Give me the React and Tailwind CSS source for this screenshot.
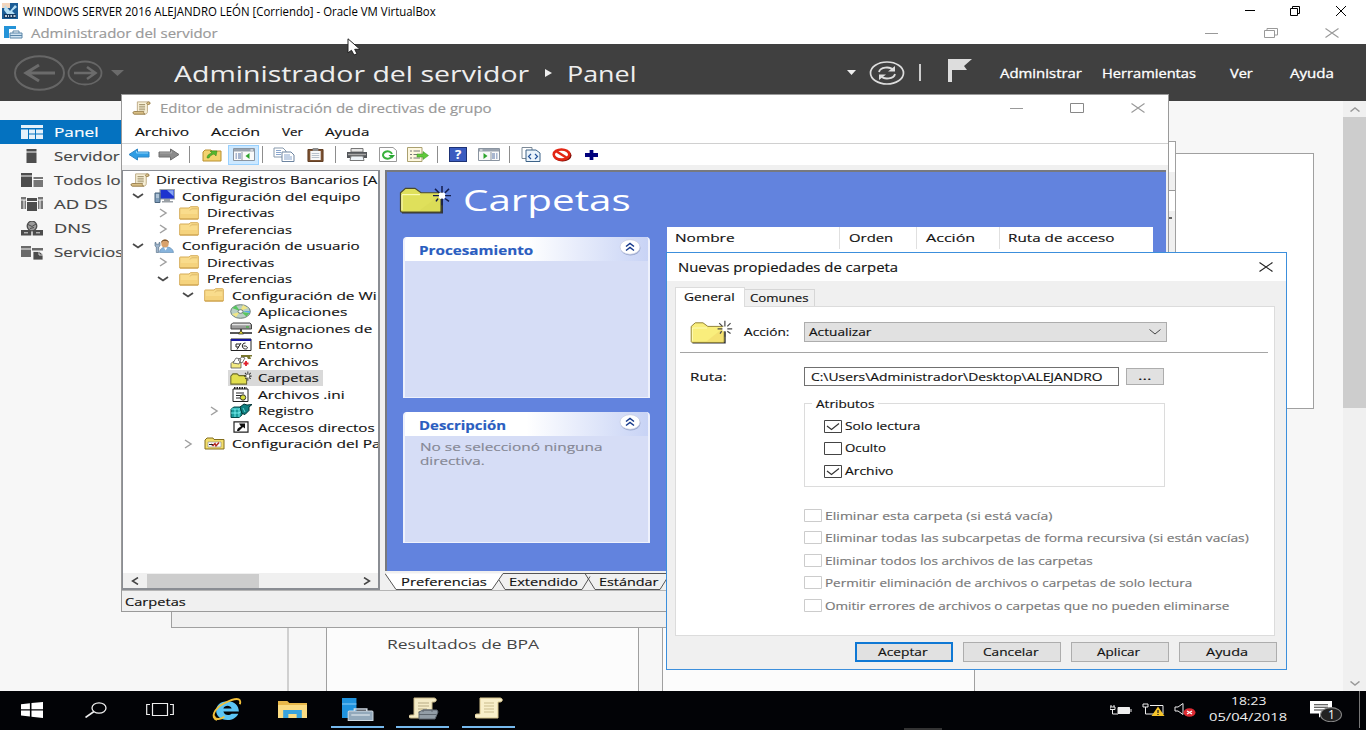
import React, { useLayoutEffect, useRef, useState } from "react";

/* Single-line label whose glyphs are stretched to fill the given width. */
function T({ w, className = "", children }) {
  const ref = useRef(null);
  const [k, setK] = useState(1);
  useLayoutEffect(() => {
    const n = ref.current.offsetWidth;
    if (n) setK(w / n);
  }, [w, children]);
  return (
    <span className={"block shrink-0 whitespace-nowrap " + className} style={{ width: w }}>
      <span ref={ref} className="inline-block origin-left" style={{ transform: `scaleX(${k})` }}>
        {children}
      </span>
    </span>
  );
}

function S({ w, h, vb = "0 0 16 16", className = "", children }) {
  return (
    <svg width={w} height={h} viewBox={vb} preserveAspectRatio="none" fill="none" className={"block shrink-0 " + className}>
      {children}
    </svg>
  );
}

/* ---------- icons ---------- */
const Scroll = ({ w = 20, h = 16, className }) => (
  <S w={w} h={h} className={className}>
    <path d="M4.500 1h9.500c1.800 0 1.800 3 0 3h-1v8c0 2-1 3-2 3H2c-1.500 0-1.500-3 0-3h2.500z" fill="#f7efd6" stroke="#b5a077" strokeWidth=".8" />
    <path d="M13 4c-1-.5-.8-2.500.8-3 1.500 0 1.700 2.500.2 3zM2 12h8c-.5 1 0 3 1 3H2c-1.500-.5-1.500-2.500 0-3z" fill="#d9bf85" stroke="#8d7443" strokeWidth=".7" />
    <path d="M6 4h5M6 6h5M6 8h5M6 10h5" stroke="#a89a74" strokeWidth=".9" />
  </S>
);
const Folder = () => (
  <S w={20} h={14} vb="0 0 20 14">
    <path d="M.7 2.500q0-.5.5-.5H10l1.500-1.300H18.500q.8 0 .8.600V13H.7z" fill="#f9dc8c" stroke="#d6ac57" />
    <path d="M11 4.500l1.500-1.700h6" stroke="#d9b566" strokeWidth=".9" />
    <path d="M1.500 8h17v4.500h-17z" fill="#f3cf76" opacity=".7" />
    <path d="M1 13h18" stroke="#c99d47" />
  </S>
);
const Burst = () => (
  <path d="M43 1v7M43 14v7M34 11h6M46 11h6M36 4l4 4M46 14l4 3M50 4l-4 4M39 14l-2 3" />
);
const BigFolder = ({ w, h, dark }) => (
  <S w={w} h={h} vb="0 0 53 30">
    <path d="M3 28.500h40V14" stroke="#30333a" strokeWidth="2" />
    <path d="M1.500 27V8l5-4.500H16L22 8h20v19q0 1-1 1H3q-1.500 0-1.500-1z" fill={dark ? "#dfe05b" : "#f9ee7c"} stroke={dark ? "#4b4b2c" : "#8f7f35"} strokeWidth="1.200" />
    <path d="M3 26V10h18" stroke="#ffffc4" />
    <path d="M20 27L41 27V10z" fill={dark ? "#d9d955" : "#f0d96a"} opacity=".6" />
    <circle cx="43" cy="11" r="3.500" fill="#fff" />
    <g stroke={dark ? "#141d4d" : "#4a4a4a"} strokeWidth="1.500"><Burst /></g>
  </S>
);
const ServerMini = () => (
  <S w={19} h={13} vb="0 0 19 13">
    <path d="M0 0h12v3H5v9H0z" fill="#2493d8" />
    <path d="M6 7h12v5H6z" fill="#cfe3f2" stroke="#5b86a8" />
    <path d="M9 7V5h6v2M6 9.500h12" stroke="#5b86a8" />
  </S>
);
const SideIcons = {
  panel: (
    <S w={22} h={14} vb="0 0 22 14">
      <path d="M0 0h22v3H0zM0 4.500h7V14H0zM8 4.500h6v4H8zM15 4.500h7v4h-7zM8 9.500h6V14H8zM15 9.500h7V14h-7z" fill="#e5f1fa" />
    </S>
  ),
  server: (
    <S w={22} h={14} vb="0 0 22 14">
      <path d="M5.500 0h10v2.500h-10zM5.500 3.500h10V14h-10z" fill="#4d4d4d" />
    </S>
  ),
  all: (
    <S w={22} h={14} vb="0 0 22 14">
      <path d="M0 0h11v2.500H0zM0 3.500h11V14H0z" fill="#4d4d4d" />
      <path d="M12.500 4H22v2h-9.500zM12.500 7H22v7h-9.500z" fill="#777" />
    </S>
  ),
  ad: (
    <S w={22} h={14} vb="0 0 22 14">
      <path d="M0 0h5v2.500H0zM0 3.500h2.500V12H0zM3.500 3.500H5V12H3.500zM22 0h-5v2.500h5zM22 3.500h-2.500V12H22zM18.500 3.500H17V12h1.500z" fill="#777" />
      <path d="M6 1h10v3H6zM6 5h10v9H6z" fill="#4d4d4d" />
    </S>
  ),
  dns: (
    <S w={22} h={15} vb="0 0 22 15">
      <circle cx="11" cy="5" r="4.800" fill="#9a9a9a" stroke="#4d4d4d" strokeWidth="1.300" />
      <path d="M7 3.500l4 2 4-2.500M9 7.500l4-1" stroke="#4d4d4d" />
      <path d="M0 9h10.300v5.500H0zM11.700 9H22v5.500H11.700z" fill="#4d4d4d" />
      <path d="M3 11.800h4M15 11.800h4" stroke="#ddd" />
    </S>
  ),
  files: (
    <S w={22} h={15} vb="0 0 22 15">
      <path d="M0 1h10v2.500H0zM0 4.500h10V12H0zM11 3h11v2.500H11z" fill="#6a6a6a" />
      <path d="M12 6.500h6.500l3.500 3V15H12z" fill="#4d4d4d" stroke="#f7f7f7" strokeWidth=".8" />
      <path d="M18 6.500v3.500h4" stroke="#f7f7f7" strokeWidth=".8" />
    </S>
  ),
};
const Arrow = ({ right, className = "" }) => (
  <S w={22} h={13} vb="0 0 22 13" className={className + (right ? "" : " -scale-x-100")}>
    <path d="M1 4h11.500V1L21 6.500 12.500 12V9H1z" fill={right ? "#8b8b8b" : "#2f9de4"} stroke={right ? "#6e6e6e" : "#2e86c6"} />
    <path d="M2 5h11.500V3" stroke={right ? "#aaa" : "#8dd3fa"} />
  </S>
);
const WinPane = ({ flip }) => (
  <S w={22} h={13} vb="0 0 22 13" className={flip ? "-scale-x-100" : ""}>
    <path d="M.5.5h21v12H.5z" fill="#fafafa" stroke="#8a94a0" />
    <path d="M1 1h20v2.500H1z" fill="#9aa3af" />
    <path d="M17.500 2h2.500" stroke="#fff" />
    <path d="M9 4v8" stroke="#8a94a0" />
    <path d="M2.500 6H4M2.500 8H4M2.500 10H4M5 6h3M5 8h3M5 10h3" stroke="#5672a5" />
    <path d="M16.500 5v6L12.500 8z" fill="#2ea52e" />
  </S>
);
const IconPC = () => (
  <S w={21} h={14} vb="0 0 21 14">
    <path d="M6 .5h14.500v9.500H6z" fill="#1d33cf" stroke="#9aa2ab" strokeWidth="1.200" />
    <path d="M13 1.200h6.500v6z" fill="#86a5f2" />
    <path d="M10 10h6v2h3v1.500H8V12h2z" fill="#9aa0a6" />
    <path d="M1 4h5v9.500H1z" fill="#7f9dba" stroke="#4b647d" />
    <path d="M2 6h3M2 8h3" stroke="#dfe9f2" />
  </S>
);
const IconUser = () => (
  <S w={20} h={14} vb="0 0 20 14">
    <path d="M5.500 13.500c0-7.500 13.500-7.500 14 0z" fill="#86b3dc" stroke="#5b87ae" strokeWidth=".6" />
    <ellipse cx="11" cy="4.500" rx="3.700" ry="4" fill="#d9a26c" />
    <path d="M7 4C7-.8 15-.8 15 4l-2-2h-4z" fill="#7a5733" />
    <path d="M10 8.500l1.500 3 2-3z" fill="#fff" />
    <path d="M1 3.500h1v1.700h3V3.500h1V7L4.700 8v5.500H2.300V8L1 7z" fill="#9db4cb" stroke="#4b647d" strokeWidth=".6" />
  </S>
);
const IconDisc = () => (
  <S w={21} h={15} vb="0 0 21 15">
    <ellipse cx="10.500" cy="7.500" rx="9.800" ry="6.800" fill="#b9cfc4" stroke="#6c7d77" />
    <path d="M10 7L2 4l4-2.500zM11 8l5.500 4.500 3-3.500z" fill="#57c65f" />
    <path d="M10 7L13 1l5 3zM10 8l-4 5-4-3z" fill="#f0e685" />
    <path d="M12 7h8v2z" fill="#5aa8e8" />
    <ellipse cx="10.500" cy="7.500" rx="2.500" ry="1.800" fill="#fff" stroke="#6c7d77" />
  </S>
);
const IconDrive = () => (
  <S w={22} h={13} vb="0 0 22 13">
    <path d="M3 1h17l1.500 1.500V7H1V2.500z" fill="#9c9c9c" stroke="#444" />
    <path d="M2 2.500h18" stroke="#e5e5e5" strokeWidth="1.500" />
    <path d="M16 5h3" stroke="#2b2" />
    <path d="M11 7v3M0 11h22" stroke="#222" strokeWidth="1.500" />
    <path d="M8.500 12L11 8.500l2.500 3.500z" fill="#e5da2d" stroke="#222" strokeWidth=".7" />
  </S>
);
const IconEnv = () => (
  <S w={22} h={13} vb="0 0 22 13">
    <path d="M1 1h20v11.500H1z" fill="#fff" stroke="#222" />
    <path d="M1 1h20v2H1z" fill="#1717a0" />
    <path d="M11 5l-4 6.500M10 6H6v3h3M15.500 5c-4.500 0-4 6 0 6 3 0 2.500-3.500-2-3" stroke="#222" />
  </S>
);
const IconFiles = () => (
  <S w={22} h={15} vb="0 0 22 15">
    <path d="M1 9.500l2-2h4l1 1h3V14H1z" fill="#f3ea82" stroke="#555" strokeWidth=".8" />
    <path d="M3 9l3-5 5 1-2 5zM8 6l4-3 3 1-3 5z" fill="#fff" stroke="#555" strokeWidth=".8" />
    <path d="M11 1h11v1.500h-2L21 5h-3l-1-2h-6z" fill="#77762e" />
    <path d="M16 7v5M13.500 9.500h5" stroke="#e0202d" strokeWidth="1.800" />
  </S>
);
const IconCarp = () => (
  <S w={22} h={14} vb="0 0 53 30">
    <path d="M2 28V11l5-5h10l5 4h18v18z" fill="#e2df4e" stroke="#6b6a2c" strokeWidth="2.500" />
    <circle cx="42" cy="11" r="4" fill="#fff" />
    <g stroke="#333" strokeWidth="2.200"><Burst /></g>
  </S>
);
const IconIni = () => (
  <S w={17} h={15} vb="0 0 17 15">
    <path d="M1 2h15v12.500H1z" fill="#fff" stroke="#222" />
    <path d="M2 1h13" stroke="#222" strokeWidth="2" strokeDasharray="1.500 1" />
    <path d="M4 6h8M4 8.500h6M4 11h4" stroke="#222" />
    <circle cx="11" cy="10.500" r="2.700" fill="#d7dc3a" stroke="#333" />
  </S>
);
const IconReg = () => (
  <S w={22} h={15} vb="0 0 22 15">
    <path d="M1 6l3-2h8v8l-3 2.500H1z" fill="#1a9b9b" stroke="#064848" />
    <path d="M1 10h8l3-2M5 6v8M9 6v8M1 6h8l3-2" stroke="#8ff" strokeWidth=".8" />
    <path d="M10 4l4-3 3 1 5-.5-3 2.500v3.500l-4 4-3-1z" fill="#0f7f80" stroke="#033" />
    <path d="M13 5l2 4" stroke="#5fd6d6" />
  </S>
);
const IconLink = () => (
  <S w={16} h={12} vb="0 0 16 12">
    <path d="M1 .8h14v10.400H1z" fill="#fff" stroke="#222" strokeWidth="1.200" />
    <path d="M6 2.500h6v5l-2-1.500-4 4H4c0-2 1-3 4-4.500z" fill="#111" />
  </S>
);
const IconCP = () => (
  <S w={21} h={13} vb="0 0 21 13">
    <path d="M1 3l2-2h6l1 1.500h10V12H1z" fill="#f3de6d" stroke="#846f1c" />
    <path d="M4 5h13v5H4z" fill="#fff" stroke="#888" strokeWidth=".6" />
    <path d="M7 7l2 1.500L11 6.500l1 2.500 3-3.500" stroke="#b02a20" strokeWidth="1.400" />
    <path d="M5 7.500h4" stroke="#222" />
  </S>
);
const Chev = ({ open, className = "" }) => (
  <S w={12} h={10} vb="0 0 12 10" className={className}>
    {open ? <path d="M1 3l5 3.500L11 3" stroke="#4a4a4a" strokeWidth="1.800" /> : <path d="M3 1l6 4-6 4" stroke="#a0a0a0" strokeWidth="1.500" />}
  </S>
);
const Min = ({ c }) => <S w={13} h={12} vb="0 0 13 12"><path d="M0 6.500h13" stroke={c} /></S>;
const Close = ({ w = 14, h = 10, c, sw = 1.1 }) => (
  <S w={w} h={h} vb="0 0 14 10"><path d="M.5.5l13 9M13.500.5l-13 9" stroke={c} strokeWidth={sw} /></S>
);

/* ---------- group policy editor ---------- */
function Row({ pad, chev, icon, label, w, sel }) {
  return (
    <div className={"flex h-[16.5px] shrink-0 items-center " + pad}>
      {chev !== undefined && <Chev open={chev} className="mr-[10px]" />}
      <div className={"flex h-full items-center " + (sel ? "-ml-[2px] bg-[#d9d9d9] pl-[2px] pr-1" : "")}>
        <div className="flex w-[28px] shrink-0 items-center">{icon}</div>
        <T w={w}>{label}</T>
      </div>
    </div>
  );
}

function Tree() {
  return (
    <div className="flex w-[258px] shrink-0 flex-col border border-r-2 border-b-2 border-[#8a8d93] bg-white">
      <div className="flex h-[402px] flex-col overflow-hidden">
        <div className="flex h-[17px] shrink-0 items-center pl-[7px]"><Scroll w={20} h={14} className="mr-[6px]" /><T w={221}>Directiva Registros Bancarios [A</T></div>
        <Row pad="pl-[9px]" chev={true} icon={<IconPC />} label="Configuración del equipo" w={179} />
        <Row pad="pl-[34px]" chev={false} icon={<Folder />} label="Directivas" w={68} />
        <Row pad="pl-[34px]" chev={false} icon={<Folder />} label="Preferencias" w={85} />
        <Row pad="pl-[9px]" chev={true} icon={<IconUser />} label="Configuración de usuario" w={178} />
        <Row pad="pl-[34px]" chev={false} icon={<Folder />} label="Directivas" w={68} />
        <Row pad="pl-[34px]" chev={true} icon={<Folder />} label="Preferencias" w={85} />
        <Row pad="pl-[59px]" chev={true} icon={<Folder />} label="Configuración de Wi" w={145} />
        <Row pad="pl-[107px]" icon={<IconDisc />} label="Aplicaciones" w={89} />
        <Row pad="pl-[107px]" icon={<IconDrive />} label="Asignaciones de" w={114} />
        <Row pad="pl-[107px]" icon={<IconEnv />} label="Entorno" w={55} />
        <Row pad="pl-[107px]" icon={<IconFiles />} label="Archivos" w={61} />
        <Row pad="pl-[107px]" icon={<IconCarp />} label="Carpetas" w={61} sel />
        <Row pad="pl-[107px]" icon={<span className="pl-[2px]"><IconIni /></span>} label="Archivos .ini" w={86} />
        <Row pad="pl-[85px]" chev={false} icon={<IconReg />} label="Registro" w={56} />
        <Row pad="pl-[107px]" icon={<span className="pl-[3px]"><IconLink /></span>} label="Accesos directos" w={117} />
        <Row pad="pl-[59px]" chev={false} icon={<IconCP />} label="Configuración del Pa" w={148} />
      </div>
      <div className="flex h-[15px] shrink-0 items-center bg-[#f0f0f0]">
        <S w={8} h={8} vb="0 0 8 8" className="ml-[8px]"><path d="M7 .5L1.500 4 7 7.500" stroke="#444" strokeWidth="1.500" /></S>
        <div className="ml-[8px] h-[14px] w-[112px] bg-[#cdcdcd]" />
        <S w={8} h={8} vb="0 0 8 8" className="ml-[104px]"><path d="M1 .5L6.500 4 1 7.500" stroke="#444" strokeWidth="1.500" /></S>
      </div>
    </div>
  );
}

function Card({ title, w, className, children }) {
  return (
    <div className={"flex w-[247px] flex-col overflow-hidden rounded-t-[4px] border-x-2 border-b border-[#eef1fc] bg-[#d6ddf6] " + className}>
      <div className="flex h-[24px] shrink-0 items-center justify-between bg-linear-to-r from-white from-50% to-[#c8d3f5] pl-[14px] pr-[7px]">
        <T w={w} className="pt-[3px] text-[11.5px] font-bold text-[#2a5dc0]">{title}</T>
        <S w={22} h={17} vb="0 0 22 17" className="-mt-[3px]">
          <ellipse cx="11.500" cy="9" rx="10" ry="7.500" fill="#9aa8d0" />
          <ellipse cx="11" cy="8" rx="10" ry="7.300" fill="#fff" stroke="#c5cbe0" strokeWidth=".7" />
          <path d="M7 7.500l4-3 4 3M7 11.500l4-3 4 3" stroke="#173a8c" strokeWidth="1.500" />
        </S>
      </div>
      {children}
    </div>
  );
}

const Sep = ({ className }) => <div className={"h-[17px] w-px shrink-0 bg-[#8d8d8d] " + className} />;

function Toolbar() {
  return (
    <div className="flex h-[22px] shrink-0 items-center border-t border-[#d0d0d0] bg-white pl-[6px]">
      <Arrow />
      <Arrow right className="ml-[8px]" />
      <Sep className="ml-[9px]" />
      <S w={20} h={14} vb="0 0 20 14" className="ml-[12px]">
        <path d="M1 4l2-2h6l1 1h9v10H1z" fill="#f3d36f" stroke="#b98f31" />
        <path d="M5 10c0-3 2-4 5-5l-2-2h7l-1 5-2-2c-3 1-4 2-5 4z" fill="#55b82e" stroke="#35801a" strokeWidth=".5" />
      </S>
      <div className="ml-[6px] flex h-[20px] w-[31px] items-center justify-center border border-[#99d1ff] bg-[#cce8ff]"><WinPane /></div>
      <Sep className="ml-[3px]" />
      <S w={22} h={15} vb="0 0 22 15" className="ml-[10px]">
        <path d="M1 1h9l3 3v6H1z" fill="#fff" stroke="#8799ac" />
        <path d="M9 5h9l3 3v6.500H9z" fill="#fff" stroke="#6d84a0" />
        <path d="M3 3.500h5M3 5.500h5M3 7.500h5M11 8h6M11 10h8M11 12h8" stroke="#88a5cd" />
      </S>
      <S w={17} h={14} vb="0 0 18 14" className="ml-[12px]">
        <path d="M1 1.500h16v12H1z" fill="#7b5131" stroke="#5f3c20" />
        <path d="M3.500 3h11v9h-11z" fill="#f7f7f7" />
        <path d="M6 0h6v3H6z" fill="#8c8c8c" />
        <path d="M5 5.500h8M5 7.500h8M5 9.500h8" stroke="#9aa6b5" strokeWidth=".7" />
      </S>
      <Sep className="ml-[11px]" />
      <S w={22} h={13} vb="0 0 22 13" className="ml-[10px]">
        <path d="M5 .5h12V4H5z" fill="#e7e7e7" stroke="#777" />
        <path d="M1 4h20v6H1z" fill="#53565a" />
        <path d="M2 6.500h18" stroke="#a7a7a7" strokeWidth="1.500" />
        <path d="M5 8h12l1 4.500H4z" fill="#eef4f9" stroke="#777" />
      </S>
      <S w={18} h={15} vb="0 0 18 15" className="ml-[11px]">
        <path d="M.5.5H14l3.500 3v11H.5z" fill="#fff" stroke="#999" />
        <path d="M12 10.500A4.600 3.700 0 1 1 13 7" stroke="#38b13c" strokeWidth="2" />
        <path d="M9.500 8h6.500L13 11.500z" fill="#27a531" />
      </S>
      <S w={22} h={15} vb="0 0 22 15" className="ml-[10px]">
        <path d="M.5.5H15v14H.5z" fill="#fdf7df" stroke="#aaa06f" />
        <path d="M3 4h2M6.500 4H13M3 7.500h2M6.500 7.500H11M3 11h2M6.500 11H13" stroke="#777" />
        <path d="M10 7h6V4.500l5.500 4-5.500 4V10h-6z" fill="#5fc93a" stroke="#389221" strokeWidth=".5" />
      </S>
      <Sep className="ml-[8px]" />
      <div className="ml-[11px] flex h-[15px] w-[18px] items-center justify-center border border-[#1d3275] bg-[#3a5cc0] text-[13px] font-bold leading-none text-white">?</div>
      <div className="ml-[11px]"><WinPane flip /></div>
      <Sep className="ml-[9px]" />
      <S w={20} h={15} vb="0 0 20 15" className="ml-[11px]">
        <path d="M1 .5h10v11H1z" fill="#fff" stroke="#7d8a97" />
        <path d="M5 3h10l4 3v8.500H5z" fill="#eaf3fb" stroke="#3c6287" />
        <path d="M10 7L7.500 9.500 10 12M14 7l2.500 2.500L14 12" stroke="#23539b" strokeWidth="1.200" />
      </S>
      <S w={20} h={14} vb="0 0 20 14" className="ml-[11px]">
        <ellipse cx="10.500" cy="7.500" rx="9" ry="6" fill="#7a0f08" />
        <ellipse cx="9.500" cy="6.500" rx="7.800" ry="5" fill="#fff" stroke="#e32614" strokeWidth="2.600" />
        <path d="M4 3l11 7" stroke="#e32614" strokeWidth="2.600" />
      </S>
      <S w={13} h={10} vb="0 0 14 10" className="ml-[13px]"><path d="M5 0h4v3h5v4H9v3H5V7H0V3h5z" fill="#00007c" /></S>
    </div>
  );
}

function Editor() {
  return (
    <div className="absolute left-[121px] top-[94px] flex h-[518px] w-[1048px] flex-col border border-[#9a9a9a] bg-[#f0f0f0] text-[11.5px] text-[#111] [-webkit-text-stroke:0.15px]">
      <div className="flex h-[26px] shrink-0 items-center bg-white pl-[10px] pr-[23px]">
        <Scroll w={19} h={14} />
        <T w={332} className="ml-[9px] pt-[2px] text-[11.7px] text-[#999]">Editor de administración de directivas de grupo</T>
        <div className="flex-1" />
        <Min c="#999" />
        <S w={14} h={10} vb="0 0 14 10" className="ml-[47px]"><path d="M.5.5h13v9H.5z" stroke="#888" /></S>
        <div className="w-[47px]" />
        <Close c="#999" />
      </div>
      <div className="flex h-[22px] shrink-0 items-center bg-white pl-[13px]">
        <T w={54}>Archivo</T>
        <T w={49} className="ml-[22px]">Acción</T>
        <T w={21} className="ml-[22px]">Ver</T>
        <T w={45} className="ml-[22px]">Ayuda</T>
      </div>
      <Toolbar />
      <div className="mt-[5px] flex h-[420px] shrink-0">
        <Tree />
        <div className="ml-[5px] flex min-w-0 flex-1 flex-col">
          <div className="mr-[2px] flex h-[401px] flex-col border-l-2 border-t-2 border-[#77797f] bg-[#6283de]">
            <div className="flex h-[55px] shrink-0 items-center pl-[12px]">
              <BigFolder w={53} h={29} dark />
              <T w={167} className="ml-[11px] text-[28.5px] leading-[30px] text-white [-webkit-text-stroke:0px]">Carpetas</T>
            </div>
            <div className="flex flex-1 pl-[16px]">
              <div className="flex flex-col pt-[10px]">
                <Card title="Procesamiento" w={114} className="h-[161px]" />
                <Card title="Descripción" w={87} className="mt-[14px] h-[131px]">
                  <div className="flex flex-col pl-[15px] pt-[4px] text-[11.5px] leading-[14px] text-[#858794]">
                    <T w={182}>No se seleccionó ninguna</T>
                    <T w={65}>directiva.</T>
                  </div>
                </Card>
              </div>
              <div className="ml-[17px] flex h-[100px] w-[486px] bg-white text-[11.5px]">
                <div className="flex h-[22px] w-[173px] items-center border-r border-[#e0e0e0] pl-[8px]"><T w={59}>Nombre</T></div>
                <div className="flex h-[22px] w-[77px] items-center border-r border-[#e0e0e0] pl-[9px]"><T w={44}>Orden</T></div>
                <div className="flex h-[22px] w-[83px] items-center border-r border-[#e0e0e0] pl-[9px]"><T w={49}>Acción</T></div>
                <div className="flex h-[22px] items-center pl-[8px]"><T w={106}>Ruta de acceso</T></div>
              </div>
            </div>
          </div>
          <div className="relative flex h-[19px] items-center">
            <S w={290} h={17} vb="0 0 290 17" className="absolute left-0 top-[2px]">
              <path d="M0 .5L11 16.500h96L118 .5z" fill="#fff" />
              <path d="M0 .5L11 16.500h96L118 .5H290M114 7l6 9.500h77L205 3.500M200 .5l10 16H275L285 .5" stroke="#555" />
            </S>
            <div className="relative flex items-center pl-[16px] pt-[3px]">
              <T w={86}>Preferencias</T>
              <T w={69} className="ml-[22px]">Extendido</T>
              <T w={60} className="ml-[21px]">Estándar</T>
            </div>
          </div>
        </div>
      </div>
      <div className="flex flex-1 items-center border-t border-[#b5b5b5] pl-[3px] pt-[2px]"><T w={61}>Carpetas</T></div>
    </div>
  );
}

/* ---------- properties dialog ---------- */
const Box = ({ on, off }) => (
  <S w={18} h={13} vb="0 0 18 13" className="mr-[3px]">
    <path d="M.5.5h17v12H.5z" fill="#fff" stroke={off ? "#ccc" : "#444"} />
    {on && <path d="M3 6l4.500 3.500L15 3.500" stroke="#333" strokeWidth="1.200" />}
  </S>
);
const Btn = ({ w, children, className = "border border-[#adadad]" }) => (
  <div className={"flex h-[20px] w-[98px] items-center justify-center bg-[#e1e1e1] pr-[3px] pt-px " + className}><T w={w}>{children}</T></div>
);

const DELETE_OPTIONS = [
  ["Eliminar esta carpeta (si está vacía)", 227],
  ["Eliminar todas las subcarpetas de forma recursiva (si están vacías)", 424],
  ["Eliminar todos los archivos de las carpetas", 268],
  ["Permitir eliminación de archivos o carpetas de solo lectura", 367],
  ["Omitir errores de archivos o carpetas que no pueden eliminarse", 404],
];

function Dialog() {
  return (
    <div className="absolute left-[666px] top-[252px] flex h-[418px] w-[621px] flex-col border border-[#3c8fdc] bg-[#f0f0f0] text-[11px] text-[#111] [-webkit-text-stroke:0.15px]">
      <div className="flex h-[28px] shrink-0 items-center justify-between bg-white pl-[11px] pr-[13px]">
        <T w={220} className="pt-px text-[11.7px]">Nuevas propiedades de carpeta</T>
        <Close c="#222" w={14} h={10} />
      </div>
      <div className="mt-[6px] flex h-[19px] shrink-0 items-end pl-[8px]">
        <div className="z-10 -mb-px flex h-[20px] w-[70px] items-center border border-b-0 border-[#dcdcdc] bg-white pb-[1px] pl-[8px]"><T w={50}>General</T></div>
        <div className="flex h-[17px] w-[70px] items-center border border-b-0 border-l-0 border-[#d6d6d6] pl-[5px] pt-px"><T w={59}>Comunes</T></div>
      </div>
      <div className="ml-[8px] flex h-[330px] w-[600px] shrink-0 flex-col border border-[#dcdcdc] bg-white">
        <div className="mt-[12px] flex h-[25px] shrink-0 items-center pl-[14px]">
          <BigFolder w={43} h={24} />
          <T w={46} className="ml-[11px] pt-px">Acción:</T>
          <div className="ml-[14px] flex h-[20px] w-[363px] items-center justify-between border border-[#adadad] bg-[#e1e1e1] pl-[4px] pr-[5px]">
            <T w={62} className="pt-[2px]">Actualizar</T>
            <S w={12} h={6} vb="0 0 12 6"><path d="M.5.500L6 5 11.500.500" stroke="#444" /></S>
          </div>
        </div>
        <div className="ml-[4px] mt-[8px] h-px w-[588px] shrink-0 bg-[#a5a5a5]" />
        <div className="mt-[13px] flex h-[21px] shrink-0 items-center pl-[14px]">
          <T w={36} className="pt-px">Ruta:</T>
          <div className="ml-[78px] flex h-[19px] w-[315px] items-center border border-[#707070] bg-white pl-[6px] pt-px"><T w={292}>C:\Users\Administrador\Desktop\ALEJANDRO</T></div>
          <div className="ml-[7px] flex h-[17px] w-[38px] items-center justify-center border border-[#adadad] bg-[#e1e1e1]"><T w={14}>...</T></div>
        </div>
        <div className="ml-[128px] mt-[16px] flex h-[84px] w-[361px] shrink-0 flex-col border border-[#dcdcdc] pl-[7px]">
          <div className="-mt-[8px] flex h-[15px] shrink-0 items-center self-start bg-white px-[4px] pt-[2px]"><T w={58}>Atributos</T></div>
          <div className="mt-[4px] flex h-[22px] items-center pl-[12px]"><Box on /><T w={75}>Solo lectura</T></div>
          <div className="flex h-[23px] items-center pl-[12px]"><Box /><T w={41}>Oculto</T></div>
          <div className="flex h-[22px] items-center pl-[12px]"><Box on /><T w={48}>Archivo</T></div>
        </div>
        <div className="mt-[17px] flex flex-col pl-[128px] text-[#777]">
          {DELETE_OPTIONS.map(([label, w]) => (
            <div key={label} className="flex h-[22.5px] items-center"><Box off /><T w={w} className="pt-px">{label}</T></div>
          ))}
        </div>
      </div>
      <div className="mt-[6px] flex items-center gap-[10px] pl-[188px]">
        <Btn w={50} className="border-2 border-[#0f78d4]">Aceptar</Btn>
        <Btn w={56}>Cancelar</Btn>
        <Btn w={43}>Aplicar</Btn>
        <Btn w={42}>Ayuda</Btn>
      </div>
    </div>
  );
}

/* ---------- server manager ---------- */
const SIDE = [
  ["panel", "Panel", 44],
  ["server", "Servidor", 66],
  ["all", "Todos lo", 67],
  ["ad", "AD DS", 53],
  ["dns", "DNS", 37],
  ["files", "Servicios", 69],
];

function ServerBar() {
  return (
    <div className="flex h-[57px] shrink-0 items-center bg-[#404040] text-white">
      <S w={112} h={38} vb="0 0 112 38" className="ml-[14px]">
        <ellipse cx="25.500" cy="19" rx="24.500" ry="16.700" stroke="#666" strokeWidth="2" />
        <path d="M41 19H13M25 11l-13 8 13 8" stroke="#6b6b6b" strokeWidth="3" />
        <ellipse cx="71" cy="19" rx="16.500" ry="11.500" stroke="#666" strokeWidth="1.800" />
        <path d="M60 19h20M73 13l8.500 6-8.500 6" stroke="#6b6b6b" strokeWidth="2.500" />
        <path d="M97 16h13l-6.500 6z" fill="#6b6b6b" />
      </S>
      <T w={355} className="ml-[48px] pt-[2px] text-[21.5px] leading-[28px] text-[#eee]">Administrador del servidor</T>
      <S w={7} h={8} vb="0 0 7 8" className="ml-[16px]"><path d="M0 0l7 4-7 4z" fill="#eee" /></S>
      <T w={70} className="ml-[15px] pt-[2px] text-[21.5px] leading-[28px] text-[#eee]">Panel</T>
      <S w={9} h={5} vb="0 0 9 5" className="ml-[210px]"><path d="M0 0h9L4.500 5z" fill="#eee" /></S>
      <S w={36} h={24} vb="0 0 36 24" className="ml-[13px]">
        <ellipse cx="18" cy="12" rx="16.500" ry="11" stroke="#ddd" strokeWidth="1.700" />
        <path d="M10 11c1-5 11-6 14-2M26 13c-1 5-11 6-14 2" stroke="#ddd" strokeWidth="1.800" />
        <path d="M26 5v5.500h-7zM10 19v-5.500h7z" fill="#ddd" />
      </S>
      <div className="ml-[14px] h-[17px] w-[2px] bg-[#ccc]" />
      <S w={24} h={23} vb="0 0 24 23" className="-mt-[4px] ml-[27px]"><path d="M0 0h24l-8 7 3 4H4v12H0z" fill="#ddd" /></S>
      <div className="flex items-center pt-[2px] text-[12px] [-webkit-text-stroke:0.3px]">
        <T w={82} className="ml-[28px]">Administrar</T>
        <T w={94} className="ml-[20px]">Herramientas</T>
        <T w={23} className="ml-[34px]">Ver</T>
        <T w={44} className="ml-[37px]">Ayuda</T>
      </div>
    </div>
  );
}

function Taskbar() {
  return (
    <div className="flex h-[39px] shrink-0 bg-[#020306] pl-[21px]">
      <div className="flex items-center pb-[2px]">
        <S w={22} h={16} vb="0 0 21 16"><path d="M0 2.200l8.500-1v6H0zM10 1l11-1v7.200H10zM0 8.500h8.500v6L0 13.500zM10 8.500h11V16l-11-1.200z" fill="#fff" /></S>
        <S w={22} h={16} vb="0 0 22 16" className="ml-[42px]"><ellipse cx="14" cy="6" rx="7" ry="5.200" stroke="#eee" strokeWidth="1.300" /><path d="M9 9.500L.5 15.500" stroke="#eee" strokeWidth="1.600" /></S>
        <S w={28} h={13} vb="0 0 28 13" className="ml-[39px]"><path d="M6.500.5h15v12h-15zM4 1.500H.700v10H4M24 1.500h3.300v10H24" stroke="#eee" strokeWidth="1.200" /></S>
        <S w={31} h={23} vb="0 0 30 22" className="ml-[38px]">
          <path d="M15 3c7 0 11 4 11 10H11c1 4 6 4 8 2h6.500c-2 4-6 6-10.500 6C8 21 4 17 4 12s4-9 11-9zm-4 7h8c-1-3.500-7-3.500-8 0z" fill="#5cc5f5" />
          <path d="M5 21C-2 19 2 10 12 5S29-1 27 6M2 17c1 5 7 3 10 1" stroke="#f3c03a" strokeWidth="1.800" />
        </S>
        <S w={29} h={19} vb="0 0 28 19" className="ml-[35px]">
          <path d="M0 1h9l2 2h17v4H0z" fill="#e8b84a" /><path d="M0 5h28v13H0z" fill="#fbdc82" />
          <path d="M5 18v-8h18v8h-5v-4h-8v4z" fill="#39a3dc" />
        </S>
      </div>
      <div className="ml-[24px] flex">
        <div className="flex h-[37px] w-[53px] flex-col items-center border-b-2 border-[#76b9ed] pt-[7px]">
          <S w={32} h={23} vb="0 0 31 23">
            <path d="M0 0h14v20H0z" fill="#1f93de" /><path d="M0 6h14" stroke="#8dcffa" />
            <path d="M6 14q0-1 1-1h22q1 0 1 1v8.500H6z" fill="#93a9bb" stroke="#cfdae3" /><path d="M12 13v-2h12v2M9 17h18" stroke="#cfdae3" strokeWidth="1.500" />
          </S>
        </div>
        <div className="ml-[12px] flex h-[37px] w-[53px] flex-col items-center border-b-2 border-[#76b9ed] pl-[3px] pt-[6px]">
          <S w={30} h={24} vb="0 0 30 24">
            <path d="M5 1h20c3 0 3 4 0 4h-2v16H2c-3 0-3-3 0-3h3z" fill="#f4ebc6" stroke="#c9b988" />
            <path d="M9 6h11M9 9h11M9 12h9M9 15h6" stroke="#b7ab84" />
            <path d="M10 15l4-2h14l1 2-3 7H10z" fill="#929da6" stroke="#5e676f" /><path d="M14 15v-2h9v2M10 17.500h17" stroke="#5e676f" />
          </S>
        </div>
        <div className="ml-[13px] flex h-[37px] w-[53px] flex-col items-center border-b-2 border-[#76b9ed] pt-[6px]">
          <S w={28} h={24} vb="0 0 28 24">
            <path d="M5 1h20c3 0 3 4 0 4h-2v16H2c-3 0-3-4 0-4h3z" fill="#f8efca" stroke="#d5c48c" />
            <path d="M9 6h10M9 9h10M9 12h10M9 15h10" stroke="#cabd8e" />
          </S>
        </div>
      </div>
      <div className="flex w-[595px] items-end pl-[389px]"><div className="h-[2px] w-[38px] bg-[#333]" /></div>
      <div className="flex items-center pb-[2px]">
        <S w={22} h={10} vb="0 0 22 10"><path d="M0 2h5v2.500H0zM1 0v2M4 0v2M2.500 4v5H8" stroke="#eee" /><path d="M8 2.500h11.500v6H8z" fill="#eee" stroke="#eee" /><path d="M20.500 4h1v3h-1z" fill="#eee" /></S>
        <S w={23} h={14} vb="0 0 23 14" className="ml-[10px]"><path d="M1 1h5v3H1zM3.500 4v7H8M8 2.500h13V11H8" stroke="#eee" /><path d="M16 3.500L22.500 13h-13z" fill="#f6c52b" /><path d="M16 7v3M16 11v1" stroke="#222" strokeWidth="1.300" /></S>
        <S w={22} h={14} vb="0 0 22 14" className="ml-[9px]"><path d="M1 4h3l5-3.500v11L4 8H1z" stroke="#eee" /><ellipse cx="15.500" cy="9.500" rx="6" ry="4.300" fill="#dc2a32" /><path d="M13 8l5 3M18 8l-5 3" stroke="#fff" strokeWidth="1.300" /></S>
        <div className="ml-[13px] flex w-[78px] flex-col items-center pb-px text-[11.5px] leading-[16px] text-[#f0f0f0]">
          <T w={35}>18:23</T>
          <T w={78}>05/04/2018</T>
        </div>
        <div className="relative ml-[23px] mt-[4px]">
          <S w={32} h={21} vb="0 0 32 20"><path d="M0 0h22v12h-9l-4 4v-4H0z" fill="#fff" /><path d="M4 3.500h14M4 6h14M4 8.500h14" stroke="#333" /><ellipse cx="21" cy="13" rx="10.500" ry="6.700" fill="#222" stroke="#888" /></S>
          <span className="absolute left-[18px] top-[7px] text-[12px] leading-[14px] text-white">1</span>
        </div>
        <div className="ml-[17px] h-[37px] w-px bg-[#777]" />
      </div>
    </div>
  );
}

export default function App() {
  return (
    <div className="relative flex h-[730px] w-[1366px] flex-col overflow-hidden bg-[#f7f7f7] font-['Open_Sans','Noto_Sans',sans-serif]">
      <div className="flex h-[22px] shrink-0 items-center bg-white pl-[2px] pr-[20px]">
        <S w={16} h={16}>
          <path d="M0 0h16v16H0z" fill="#1c5d96" /><path d="M0 0h8v5H0z" fill="#f2d5bd" />
          <path d="M3 2l5 6 5-6 2 2-5 4 3 3H5L2 7z" fill="#b5dff6" /><path d="M2 11h12v4H2z" fill="#163a61" />
          <path d="M3 13h2M6 13h1M8.500 13h1.500M11.500 13h2" stroke="#fff" strokeWidth="1.500" />
        </S>
        <T w={413} className="ml-[5px] pt-[2px] text-[12px] text-black">WINDOWS SERVER 2016 ALEJANDRO LEÓN [Corriendo] - Oracle VM VirtualBox</T>
        <div className="flex-1" />
        <S w={10} h={10} vb="0 0 10 10"><path d="M0 4.500h10" stroke="#000" /></S>
        <S w={10} h={10} vb="0 0 10 10" className="ml-[35px]"><path d="M.5 2.500h7v7h-7zM2.500 2.500v-2h7v7h-2" stroke="#000" /></S>
        <S w={10} h={10} vb="0 0 10 10" className="ml-[36px]"><path d="M0 0l10 10M10 0L0 10" stroke="#000" /></S>
      </div>
      <div className="flex h-[22px] shrink-0 items-center bg-white pb-px pl-[4px] pr-[27px]">
        <ServerMini />
        <T w={187} className="ml-[8px] pt-[3px] text-[11.7px] text-[#999] [-webkit-text-stroke:0.15px]">Administrador del servidor</T>
        <div className="flex-1" />
        <Min c="#999" />
        <S w={14} h={10} vb="0 0 14 10" className="ml-[46px]"><path d="M.5 2.500h10v7H.5zM3 2.500v-2h10.500v6.500h-3" stroke="#999" /></S>
        <div className="w-[47px]" />
        <Close c="#999" />
      </div>
      <ServerBar />
      <div className="flex h-[590px] shrink-0">
        <div className="flex w-[289px] shrink-0 flex-col border-r-2 border-[#d0d0d0] pt-[19px] text-[#444]">
          {SIDE.map(([icon, label, w], i) => (
            <div key={label} className={"flex h-[24px] shrink-0 items-center pl-[21px] " + (i === 0 ? "bg-[#0472c0] text-white" : "")}>
              {SideIcons[icon]}
              <T w={w} className="ml-[11px] pt-[2px] text-[13.3px] [-webkit-text-stroke:0.15px]">{label}</T>
            </div>
          ))}
        </div>
        <div className="flex flex-1 flex-col pl-[37px] pt-[52px]">
          <div className="h-[256px] w-[988px] shrink-0 border border-[#a0a0a0] bg-white" />
          <div className="mt-[80px] flex min-h-0 flex-1 gap-[23px]">
            <div className="flex w-[313px] items-end border border-b-0 border-[#a0a0a0] bg-[#fcfcfc] pb-[38px] pl-[60px] text-[13px] leading-[18px] text-[#444]"><T w={152}>Resultados de BPA</T></div>
            <div className="w-[313px] border border-b-0 border-[#a0a0a0] bg-[#fcfcfc]" />
          </div>
        </div>
        <div className="flex w-[23px] shrink-0 flex-col items-center bg-[#f0f0f0]">
          <S w={10} h={5} vb="0 0 10 5" className="mt-[6px]"><path d="M.5 4.500L5 1l4.500 3.500" stroke="#999" strokeWidth="1.500" /></S>
          <div className="mt-[5px] h-[291px] w-full bg-[#cdcdcd]" />
          <S w={10} h={5} vb="0 0 10 5" className="mb-[5px] mt-auto"><path d="M.5.500L5 4 9.500.500" stroke="#999" strokeWidth="1.500" /></S>
        </div>
      </div>
      <Taskbar />

      <div className="absolute left-[171px] top-[141px] flex h-[487px] w-[1005px] flex-col items-end border border-[#a0a0a0] bg-[#f0f0f0]">
        <div className="h-[30px] w-full shrink-0 bg-white" />
        <div className="mt-[18px] h-[21px] w-full shrink-0 border-t border-[#999] bg-white" />
        <div className="mr-[3px] mt-[6px] h-[2px] w-[7px] bg-[#666]" />
      </div>
      <Editor />
      <Dialog />
      <S w={14} h={18} vb="0 0 14 18" className="absolute left-[347px] top-[38px]">
        <path d="M1 .8v14l3.500-2.500L7 17l3-1.200-2.300-4.500H13z" fill="#fff" stroke="#222" />
      </S>
    </div>
  );
}
